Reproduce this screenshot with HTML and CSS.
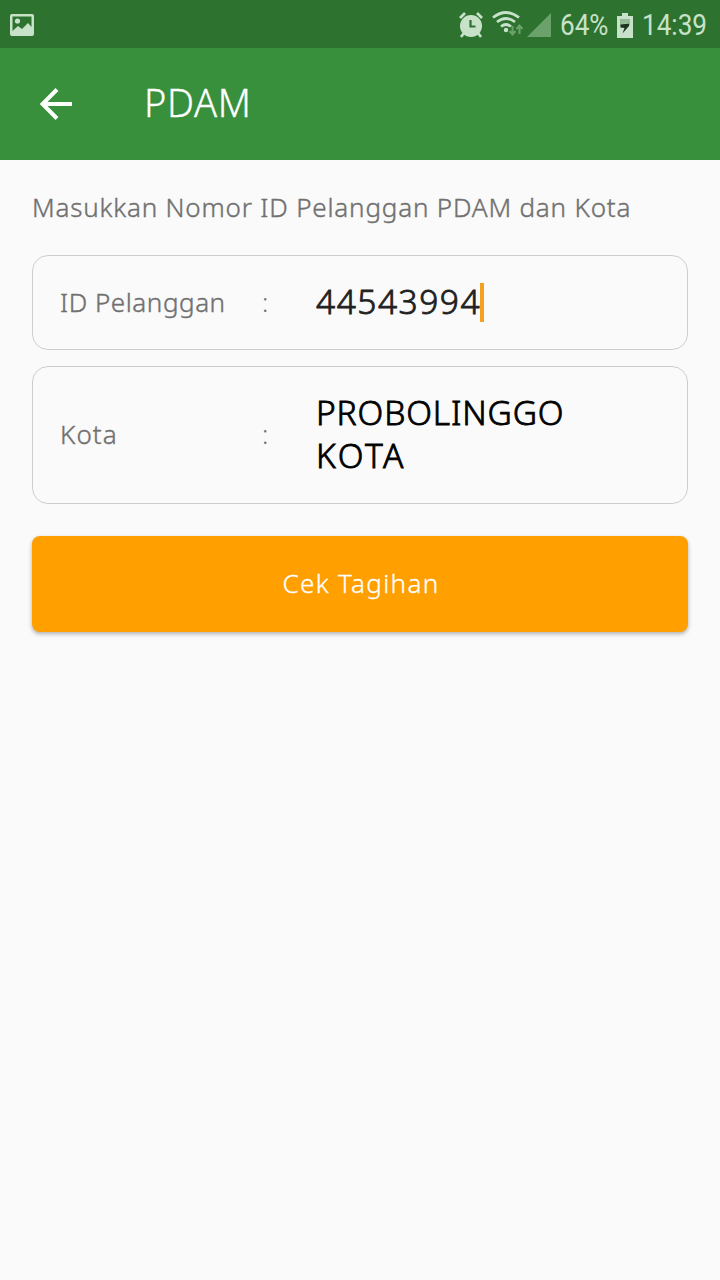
FILE: index.html
```html
<!DOCTYPE html>
<html lang="id">
<head>
<meta charset="utf-8">
<title>PDAM</title>
<link rel="stylesheet" href="styles.css">
</head>
<body>
<header class="statusbar">
  <svg class="picture" width="24" height="22" viewBox="0 0 24 22"><path fill-rule="evenodd" d="M2 0h20a2 2 0 0 1 2 2v18a2 2 0 0 1-2 2H2a2 2 0 0 1-2-2V2a2 2 0 0 1 2-2zM2.500 2.500V17L8 12l4 3 6-6 3.500 4V2.500z"/><circle cx="7.500" cy="7" r="2.600"/></svg>
  <div class="indicators">
    <svg class="alarm" width="26" height="26" viewBox="0 0 26 26"><circle cx="13" cy="14" r="11"/><path class="light-line" d="M2 6l5-5M24 6l-5-5M6 21l-3 4M20 21l3 4"/><path class="dark-line" d="M12.500 8v6.500h5"/></svg>
    <svg class="wifi" width="34" height="26" viewBox="0 0 34 26"><path class="light-line" d="M2 6.500Q15 -3.500 28 6.500M6 11Q15 4 24 11M10 15.500Q15 11.500 20 15.500"/><circle cx="15" cy="19" r="2.200"/><path class="traffic" d="M21.500 15v8M18.500 20l3 3.500 3-3.500M28.500 23v-8M25.500 18l3-3.500 3 3.500"/></svg>
    <svg class="signal" width="24" height="24" viewBox="0 0 24 24"><path d="M0 24L24 0v24z"/></svg>
    <span class="status-text percent">64%</span>
    <svg class="battery" width="16" height="25" viewBox="0 0 16 25"><path d="M5 0h6v3h5v22H0V3h5z"/><path class="empty" d="M3 6h10v4l-8 1-2 4z"/><path class="bolt" d="M12.500 10.500L3.500 11.500v3l4 .5L5.500 20.500 12 13z"/></svg>
    <span class="status-text clock">14:39</span>
  </div>
</header>
<nav class="appbar">
  <svg class="back" width="32" height="32" viewBox="0 0 32 32"><path d="M17 1.500L2.500 16 17 30.500M3 16h29"/></svg>
  <h1 class="title">PDAM</h1>
</nav>
<main class="content">
  <p class="hint">Masukkan Nomor ID Pelanggan PDAM dan Kota</p>
  <div class="field field-id"><span class="label label-id">ID Pelanggan</span><span class="colon">:</span><span class="value digits">44543994</span><span class="caret"></span></div>
  <div class="field field-city"><span class="label label-city">Kota</span><span class="colon">:</span><span class="value city"><span class="city-name">PROBOLINGGO</span><br><span class="city-kind">KOTA</span></span></div>
  <button class="submit">Cek Tagihan</button>
</main>
</body>
</html>
```
FILE: styles.css
```css
* { box-sizing: border-box; }
body { margin: 0; min-height: 1280px; background: #fafafa; color: #707070; font-family: "Noto Sans", "Open Sans", sans-serif; font-weight: 300; }
svg { display: block; flex: none; }
.statusbar { height: 48px; padding: 2px 13px 0 10px; display: flex; align-items: center; justify-content: space-between; background: #2e7230; fill: #c8e2c9; color: #c8e2c9; }
.indicators { display: flex; align-items: center; height: 46px; }
.light-line { fill: none; stroke: #c8e2c9; stroke-width: 2.7; }
.dark-line { fill: none; stroke: #2e7230; stroke-width: 2.2; }
.alarm { margin: 0 7px 0 -1px; }
.wifi { margin: 0 2px 2px 0; }
.traffic { fill: none; stroke: #6ba26c; stroke-width: 2; }
.signal { fill: #6ba26c; margin-right: 9px; }
.status-text { flex: none; font: 400 30px/40px Roboto, sans-serif; transform-origin: left center; transform: scaleX(0.87); white-space: nowrap; }
.percent { width: 57px; }
.battery { margin-right: 9px; }
.empty { fill: #93bb94; }
.bolt { fill: #1c331c; }
.clock { width: 65px; }
.appbar { height: 112px; padding-left: 40px; display: flex; align-items: center; background: #388f3c; }
.back { fill: none; stroke: #fff; stroke-width: 4; }
.title { margin: 0 0 4px 72px; color: #fff; font-size: 38px; line-height: 50px; font-weight: 300; letter-spacing: 0.7px; -webkit-text-stroke: 0.3px currentColor; }
.content { padding: 29px 32px 0; display: flex; flex-direction: column; }
.hint { margin: 0 0 30px; font-size: 26px; line-height: 36px; letter-spacing: 0.82px; white-space: nowrap; -webkit-text-stroke: 0.4px currentColor; }
.field { display: flex; align-items: center; border: 1px solid #cecece; border-radius: 16px; padding: 0 0 2px 27px; }
.field-id { height: 95px; margin-bottom: 16px; }
.field-city { height: 138px; margin-bottom: 32px; }
.label { width: 201px; font-size: 26px; line-height: 36px; letter-spacing: 0.55px; white-space: nowrap; -webkit-text-stroke: 0.4px currentColor; }
.label-city { letter-spacing: 1.1px; }
.colon { width: 55px; padding-left: 1px; font-size: 26px; line-height: 36px; }
.value { font-size: 33.5px; line-height: 43px; font-weight: 300; white-space: nowrap; -webkit-text-stroke: 0.8px currentColor; }
.digits { color: #212121; letter-spacing: 1.5px; }
.city { color: #000; }
.city-name { letter-spacing: 0.87px; }
.city-kind { letter-spacing: 2.6px; }
.caret { width: 4px; height: 39px; margin: 2px 0 0 -1px; background: #f3a11f; }
.submit { height: 96px; padding: 0 0 2px 2px; border: 0; border-radius: 8px; background: #ffa000; color: #fff; font: 300 26px/36px "Noto Sans", sans-serif; letter-spacing: 1.35px; -webkit-text-stroke: 0.3px currentColor; box-shadow: 0 2px 4px rgba(0, 0, 0, 0.3); }
```
